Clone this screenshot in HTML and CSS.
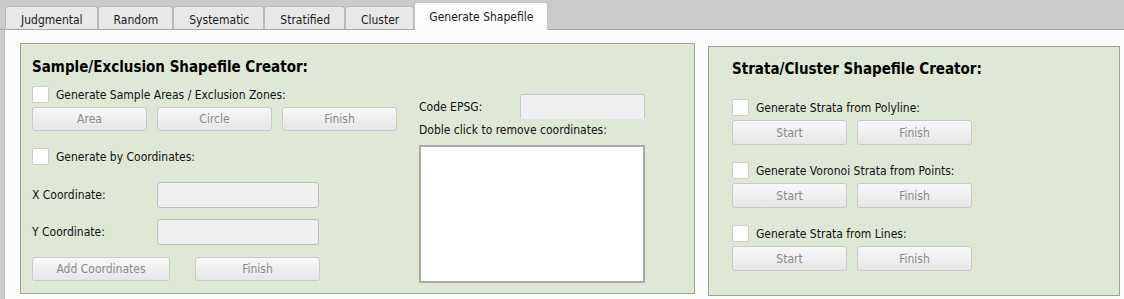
FILE: index.html
```html
<!DOCTYPE html>
<html lang="en">

<head>
    <meta charset="UTF-8">
    <meta name="viewport" content="width=device-width, initial-scale=1.0">
    <title>Generate Shapefile</title>
    <link rel="stylesheet" href="styles.css">
</head>

<body>
    <div class="tabbar">
        <div class="tab">Judgmental</div>
        <div class="tab">Random</div>
        <div class="tab">Systematic</div>
        <div class="tab">Stratified</div>
        <div class="tab">Cluster</div>
        <div class="tab active">Generate Shapefile</div>
    </div>

    <div class="pagina">
        <div class="painel painel-amostra">
            <div class="col-main">
                <h2>Sample/Exclusion Shapefile Creator:</h2>
                <label class="check-row first">
                    <input type="checkbox">
                    <span>Generate Sample Areas / Exclusion Zones:</span>
                </label>
                <div class="btn-row">
                    <button class="btn">Area</button>
                    <button class="btn">Circle</button>
                    <button class="btn">Finish</button>
                </div>
                <label class="check-row">
                    <input type="checkbox">
                    <span>Generate by Coordinates:</span>
                </label>
                <div class="field-row" id="xRow">
                    <span class="field-label">X Coordinate:</span>
                    <input class="campo" type="text">
                </div>
                <div class="field-row" id="yRow">
                    <span class="field-label">Y Coordinate:</span>
                    <input class="campo" type="text">
                </div>
                <div class="btn-row coords-btns">
                    <button class="btn" id="addBtn">Add Coordinates</button>
                    <button class="btn" id="finishCoords">Finish</button>
                </div>
            </div>
            <div class="col-list">
                <div class="epsg-row">
                    <span class="epsg-label">Code EPSG:</span>
                    <input class="campo epsg" type="text">
                </div>
                <div class="list-label">Doble click to remove coordinates:</div>
                <div class="coords-list"></div>
            </div>
        </div>

        <div class="painel painel-estrato">
            <h2>Strata/Cluster Shapefile Creator:</h2>
            <label class="check-row first">
                <input type="checkbox">
                <span>Generate Strata from Polyline:</span>
            </label>
            <div class="btn-row">
                <button class="btn">Start</button>
                <button class="btn">Finish</button>
            </div>
            <label class="check-row">
                <input type="checkbox">
                <span>Generate Voronoi Strata from Points:</span>
            </label>
            <div class="btn-row">
                <button class="btn">Start</button>
                <button class="btn">Finish</button>
            </div>
            <label class="check-row">
                <input type="checkbox">
                <span>Generate Strata from Lines:</span>
            </label>
            <div class="btn-row">
                <button class="btn">Start</button>
                <button class="btn">Finish</button>
            </div>
        </div>
    </div>
</body>

</html>
```

FILE: styles.css
```css
* {
    margin: 0;
    padding: 0;
    box-sizing: border-box;
    font-family: "DejaVu Sans Condensed", "DejaVu Sans", sans-serif;
    font-stretch: condensed;
}

body {
    background: #cccaca;
    font-size: 12px;
    color: #111;
    height: 299px;
    overflow: hidden;
}

/* abas */
.tabbar {
    display: flex;
    align-items: flex-end;
    height: 30px;
    padding-left: 5px;
    border-bottom: 1px solid #a8a8a8;
}

.tab {
    height: 23px;
    padding: 4px 14px 0 15px;
    line-height: 18px;
    background: #e8e8e8;
    border: 1px solid #b9b9b9;
    border-bottom: none;
    border-radius: 3px 3px 0 0;
    color: #1a1a1a;
}

.tab.active {
    height: 28px;
    padding: 5px 14px 0;
    margin-bottom: -1px;
    background: #fdfdfd;
    border-color: #c4c4c4;
}

/* conteudo */
.pagina {
    display: flex;
    align-items: flex-start;
    gap: 13px;
    margin-left: 4px;
    padding: 13px 0 0 15px;
    height: 269px;
    background: #fbfbfb;
    border-left: 1px solid #bdbdbd;
}

.painel {
    background: #dfe8d4;
    border: 1px solid #9ea596;
}

.painel h2 {
    font-size: 15px;
    font-weight: bold;
    line-height: 18px;
    color: #000;
}

.painel-amostra {
    display: flex;
    width: 675px;
    height: 251px;
    padding: 14px 0 0 11px;
}

.painel-estrato {
    width: 412px;
    height: 250px;
    margin-top: 3px;
    padding: 13px 0 0 23px;
}

.col-main {
    width: 387px;
}

.check-row {
    display: flex;
    align-items: center;
    gap: 7px;
    height: 17px;
    margin-top: 17px;
}

.check-row.first {
    margin-top: 10px;
}

.painel-estrato .check-row.first {
    margin-top: 21px;
}

.check-row input {
    appearance: none;
    width: 17px;
    height: 17px;
    background: #fff;
    border: 1px solid #cdcdcd;
    border-radius: 2px;
}

.btn-row {
    display: flex;
    gap: 10px;
    margin-top: 4px;
}

.btn {
    width: 115px;
    height: 24px;
    font-size: 12px;
    color: #8a8a8a;
    background-image: linear-gradient(#f8f8f8, #e6e6e6);
    border: 1px solid #c9c9c9;
    border-radius: 3px;
}

.painel-estrato .btn {
    height: 25px;
}

.field-row {
    display: flex;
    align-items: center;
    margin-top: 17px;
}

#yRow {
    margin-top: 11px;
}

.field-label {
    width: 125px;
}

.campo {
    width: 162px;
    height: 26px;
    background: #efefef;
    border: 1px solid #bdbdbd;
    border-radius: 3px;
}

.coords-btns {
    gap: 25px;
    margin-top: 12px;
}

#addBtn {
    width: 138px;
}

#finishCoords {
    width: 125px;
}

.col-list {
    padding-top: 36px;
}

.epsg-row {
    display: flex;
    align-items: center;
}

.epsg-label {
    width: 101px;
}

.campo.epsg {
    width: 125px;
    height: 25px;
    border-color: #c6c6c6;
    border-bottom-color: #efefef;
    border-radius: 2px;
}

.list-label {
    margin-top: 3px;
    line-height: 16px;
}

.coords-list {
    width: 226px;
    height: 138px;
    margin-top: 7px;
    background: #fff;
    border: 2px solid #a8a8a8;
}
```
